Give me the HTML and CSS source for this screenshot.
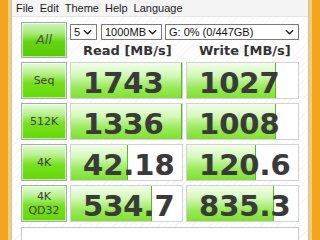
FILE: index.html
```html
<!DOCTYPE html>
<html>
<head>
<meta charset="utf-8">
<link rel="stylesheet" href="styles.css">
</head>
<body>
<div class="frame">
  <div class="win">
    <div class="inner">
      <div class="menu">
        <span>File</span><span>Edit</span><span>Theme</span><span>Help</span><span>Language</span>
      </div>
      <div class="main">
        <div class="grid">
          <div class="btn all">All</div>
          <div class="head">
            <div class="selects">
              <div class="sel s1"><span>5</span><svg class="chev" viewBox="0 0 10 6"><path d="M1 1 L5 5 L9 1" /></svg></div>
              <div class="sel s2"><span>1000MB</span><svg class="chev" viewBox="0 0 10 6"><path d="M1 1 L5 5 L9 1" /></svg></div>
              <div class="sel s3"><span>G: 0% (0/447GB)</span><svg class="chev" viewBox="0 0 10 6"><path d="M1 1 L5 5 L9 1" /></svg></div>
            </div>
            <div class="titles">
              <div class="title">Read [MB/s]</div>
              <div class="title">Write [MB/s]</div>
            </div>
          </div>

          <div class="btn">Seq</div>
          <div class="cell"><div class="bar" style="width:100%"></div><div class="val">1743</div></div>
          <div class="cell"><div class="bar" style="width:80%"></div><div class="val">1027</div></div>

          <div class="btn">512K</div>
          <div class="cell"><div class="bar" style="width:100%"></div><div class="val">1336</div></div>
          <div class="cell"><div class="bar" style="width:80%"></div><div class="val">1008</div></div>

          <div class="btn">4K</div>
          <div class="cell"><div class="bar" style="width:51%"></div><div class="val">42.18</div></div>
          <div class="cell"><div class="bar" style="width:62%"></div><div class="val">120.6</div></div>

          <div class="btn two">4K<br>QD32</div>
          <div class="cell"><div class="bar" style="width:73%"></div><div class="val">534.7</div></div>
          <div class="cell"><div class="bar" style="width:78%"></div><div class="val">835.3</div></div>
        </div>
        <div class="comment"></div>
      </div>
    </div>
  </div>
</div>
</body>
</html>
```
FILE: styles.css
```css
* { box-sizing: border-box; margin: 0; padding: 0; }
html, body { width: 320px; height: 240px; overflow: hidden; }
body { background: #f2a51e; font-family: "Liberation Sans", Arial, sans-serif; }

.frame { display: flex; height: 240px; padding: 0 8px; }
.win { flex: 1; display: flex; border-left: 3px solid #f6cd6c; border-right: 3px solid #f6cd6c; }
.inner {
  flex: 1; display: flex; flex-direction: column; overflow: hidden;
  border-left: 1px solid #c4c4c4; border-right: 1px solid #c4c4c4;
  background: repeating-linear-gradient(135deg, #ffffff 0 3px, #f6f6f6 3px 4px);
}

.menu {
  height: 17px; flex: none; display: flex; gap: 6px; align-items: center;
  padding-left: 4px; background: #f4f4f4; border-bottom: 1px solid #e4e4e4;
  font-size: 11px; color: #1a1a1a;
}

.main { flex: 1; min-height: 0; padding: 5px 0 0 9px; display: flex; flex-direction: column; gap: 5px; }

.grid {
  display: grid; flex: none;
  grid-template-columns: 46px 113px 113px;
  grid-template-rows: 36px 37px 37px 37px 37px;
  column-gap: 3px; row-gap: 4px;
}

.btn {
  display: flex; align-items: center; justify-content: center; text-align: center;
  border: 1px solid #a4aca4;
  box-shadow: inset 0 0 0 1px rgba(255,255,255,0.6);
  background: linear-gradient(#e6fada 0%, #b6f08a 30%, #78e020 55%, #64d808 100%);
  font-family: "DejaVu Sans", sans-serif; font-size: 11px; color: #404040;
  line-height: 14px;
}
.btn.all {
  font-size: 13px; font-style: italic; color: #4a5a40;
  background: linear-gradient(#d2f4c0 0%, #a6ea78 30%, #66d414 55%, #58cc00 100%);
}

.head { grid-column: 2 / 4; display: flex; flex-direction: column; }
.selects { display: flex; margin-top: 2px; height: 16px; }
.sel {
  height: 16px; background: #fff; border: 1px solid #7a7a7a;
  display: flex; align-items: center; justify-content: space-between;
  padding: 0 4px 0 3px; font-size: 11px; color: #111;
}
.s1 { width: 27px; margin-right: 4px; }
.s2 { width: 61px; margin-right: 3px; }
.s3 { width: 134px; }
.chev { width: 9px; height: 6px; fill: none; stroke: #222; stroke-width: 1.6; }

.titles { display: grid; grid-template-columns: 113px 113px; column-gap: 3px; padding-top: 3px; }
.title {
  padding-left: 13px; font-family: "DejaVu Sans", sans-serif; font-weight: bold;
  font-size: 13px; line-height: 15px; color: #333;
}

.cell { position: relative; background: #fff; border: 1px solid #d2d2d2; overflow: hidden; }
.bar {
  position: absolute; left: 0; top: 0; bottom: 0;
  background: linear-gradient(#f2fdec 0%, #d4f8b8 35%, #98ea58 70%, #80e030 100%);
  border-right: 1px solid #5cb820;
}
.val {
  position: relative; padding: 4px 0 0 12px;
  font-family: "DejaVu Sans", sans-serif; font-weight: bold; font-size: 29px;
  line-height: 32px; color: #3a3a3a;
  text-shadow: 0 0 1px rgba(0,0,0,0.15);
}

.comment { width: 278px; flex: 1; min-height: 0; background: #fff; border: 1px solid #c8c8c8; border-bottom: none; }
```
